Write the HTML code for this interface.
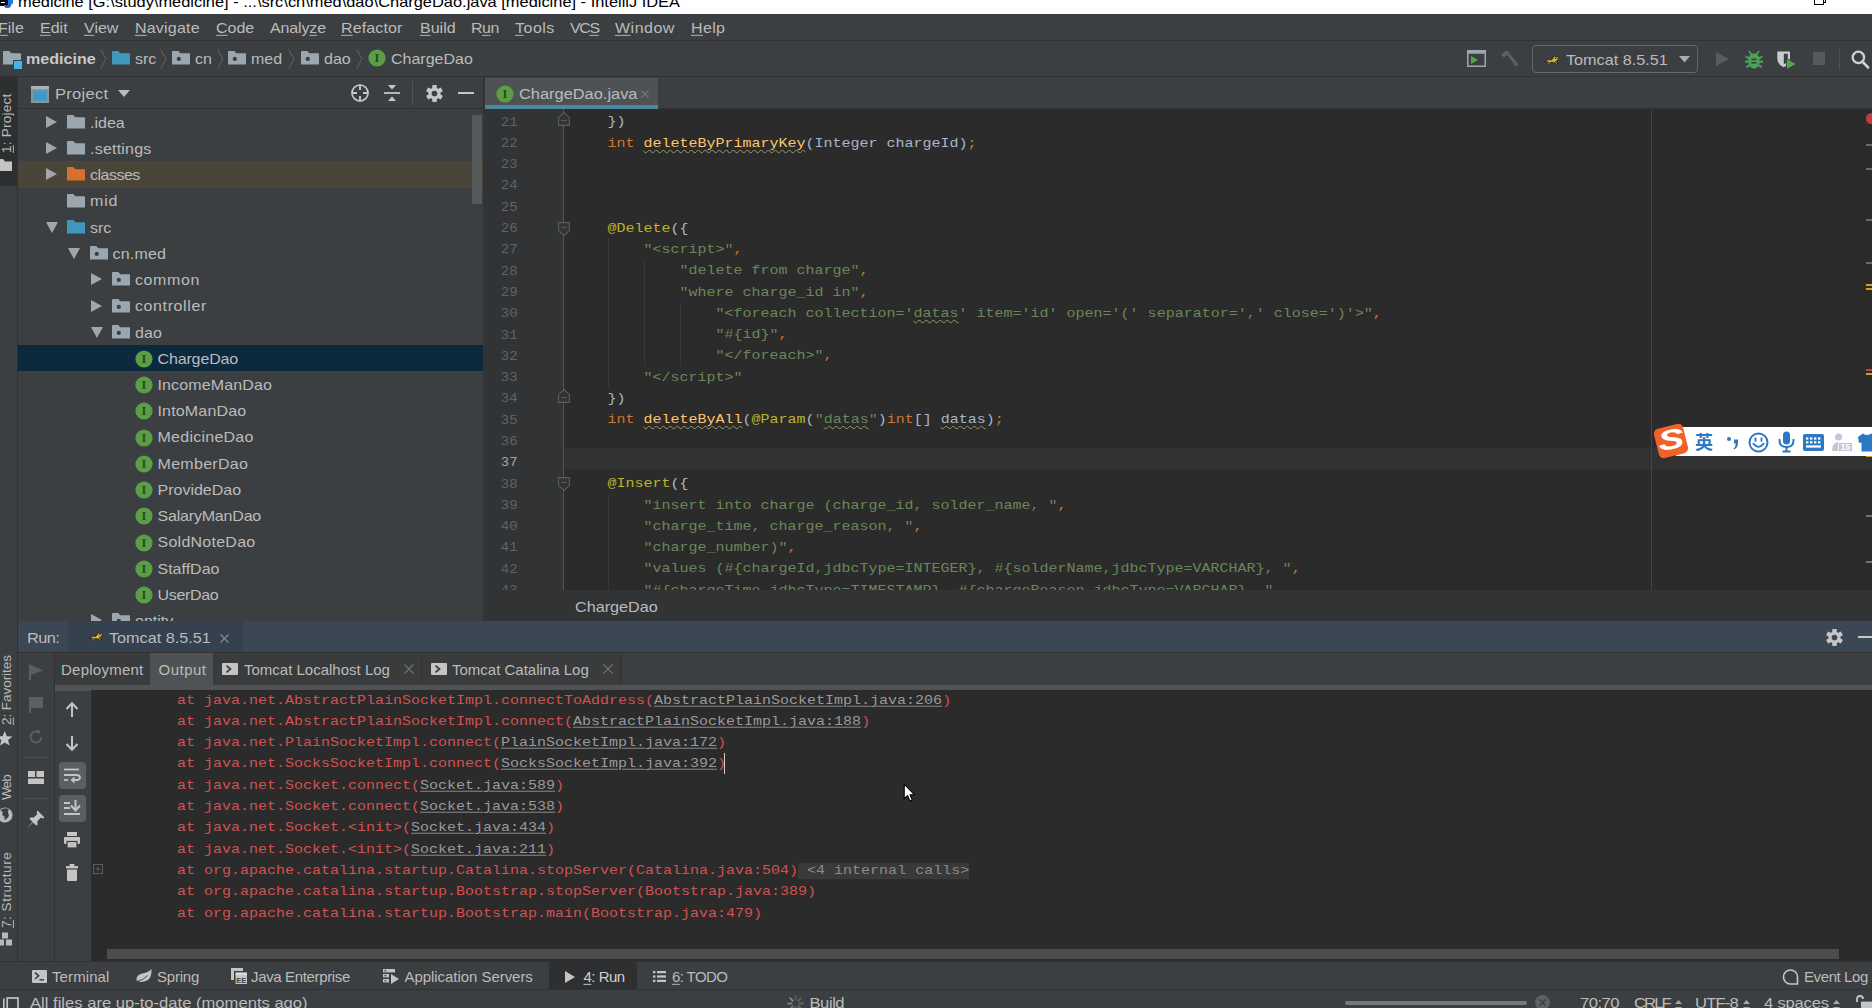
<!DOCTYPE html>
<html><head><meta charset="utf-8"><title>medicine - IntelliJ IDEA</title>
<style>
*{box-sizing:border-box;margin:0;padding:0}
html,body{width:1872px;height:1008px;overflow:hidden;background:#3c3f41}
body{position:relative;font-family:"Liberation Sans","Noto Sans CJK SC",sans-serif;font-size:16px;color:#bbbbbb;}
.a{position:absolute;white-space:pre}
u{text-decoration-thickness:1px;text-underline-offset:2px}
.mono{font-family:"Liberation Mono",monospace;font-size:15px}
svg{position:absolute;overflow:visible}
#menu span,#nav span,.row span,#bbar span,#status span,.t{transform:scaleY(0.925);transform-origin:0 15.2px}
.t{}
/* sections */
#title{left:0;top:0;width:1872px;height:14px;background:#fff;overflow:hidden}
#menu{left:0;top:14px;width:1872px;height:27px;background:#3c3f41;border-bottom:1px solid #323232}
#menu span{position:absolute;top:3.8px;line-height:20px;font-size:16px;color:#bbbbbb}
#nav{left:0;top:41px;width:1872px;height:36px;background:#3c3f41;border-bottom:1px solid #323232}
#nav span{position:absolute;top:7.6px;line-height:20px}
#lstrip{left:0;top:77px;width:18px;height:884px;background:#3c3f41;border-right:1px solid #323232}
.vt{position:absolute;transform-origin:0 0;transform:rotate(-90deg) translateY(13.5px) scaleY(0.925) translateY(-13.5px);white-space:pre;font-size:13.6px;line-height:18px;color:#bbbbbb}
#proj{left:18px;top:77px;width:465px;height:544px;background:#3c3f41;overflow:hidden}
#projh{left:0;top:0;width:465px;height:31.5px;border-bottom:1px solid #323232}
.row{position:absolute;left:0;width:465px;height:26.3px}
.row span{position:absolute;top:3.8px;line-height:20px;font-size:16px;color:#bbbbbb}
#ed{left:485px;top:77px;width:1387px;height:544px;background:#2b2b2b;overflow:hidden}
#edtabs{left:0;top:0;width:1387px;height:32px;background:#3c3f41;border-bottom:1px solid #323232}
#gut{left:0;top:32px;width:78.5px;height:481px;background:#313335}
.ln{position:absolute;left:0;width:32.6px;text-align:right;font-family:"Liberation Mono",monospace;font-size:14px;color:#606366;line-height:21px;height:21px;transform:scaleY(0.86);transform-origin:0 14.2px}
.cl{position:absolute;left:86.5px;font-family:"Liberation Mono",monospace;font-size:15px;line-height:21px;height:21px;white-space:pre;color:#a9b7c6;transform:scaleY(0.85);transform-origin:0 14.5px}
.k{color:#cc7832}.s{color:#6a8759}.an{color:#bbb529}.f{color:#ffc66d}
.w{text-decoration:underline wavy #9a9a72;text-decoration-thickness:1px;text-underline-offset:3px}
#crumb{left:0;top:513px;width:1387px;height:31px;background:#313335}
#run{left:18px;top:621px;width:1854px;height:340px;background:#3c3f41}
#runh{left:0;top:0;width:1854px;height:32px;background:#3b4754;border-bottom:1px solid #323232}
#con{left:73px;top:69px;width:1781px;height:271px;background:#2b2b2b;overflow:hidden}
.ol{position:absolute;left:86px;font-family:"Liberation Mono",monospace;font-size:15px;line-height:21px;height:21px;white-space:pre;color:#d25252;transform:scaleY(0.85);transform-origin:0 14.5px}
.ol b{font-weight:normal;color:#8a8a8a;background:#393939;padding:1px 0}
.ol i{font-style:normal;color:#9a9a9a;text-decoration:underline;text-decoration-thickness:1px;text-underline-offset:2px}
#bbar{left:0;top:961px;width:1872px;height:28px;background:#3c3f41;border-top:1px solid #323232}
#bbar span{position:absolute;top:5px;font-size:15px;line-height:20px}
#status{left:0;top:989px;width:1872px;height:19px;background:#3c3f41;border-top:1px solid #323232;overflow:hidden}
#status span{position:absolute;top:2px;font-size:16px;line-height:20px}
</style></head><body>
<!--TITLE-->
<div id="title" class="a">
<div class="a" style="left:0;top:0;width:9px;height:6px;background:#0b0b14"></div>
<div class="a" style="left:8px;top:0;width:5px;height:5px;background:#1f7be0;border-radius:0 0 3px 0"></div>
<div class="a" style="left:4px;top:5px;width:7px;height:3px;background:#2a62c9;border-radius:0 0 3px 3px"></div>
<div class="a" style="left:1px;top:2px;width:4px;height:1px;background:#fff"></div>
<div class="a t" style="left:18px;top:-9.4px;font-size:16.42px;line-height:20px;color:#000">medicine [G:\study\medicine] - ...\src\cn\med\dao\ChargeDao.java [medicine] - IntelliJ IDEA</div>
<div class="a" style="left:1822px;top:-6px;width:4px;height:9px;border:1.4px solid #000;border-left:none;background:#fff"></div>
<div class="a" style="left:1814px;top:-6px;width:9.5px;height:11.4px;border:1.4px solid #000;background:#fff"></div>
</div><!--/TITLE-->
<!--MENU-->
<div id="menu" class="a"><span style="left:-2px"><u>F</u>ile</span><span style="left:40px"><u>E</u>dit</span><span style="left:84px"><u>V</u>iew</span><span style="left:135px;letter-spacing:0.2px"><u>N</u>avigate</span><span style="left:216px"><u>C</u>ode</span><span style="left:270px;letter-spacing:-0.14px">Analy<u>z</u>e</span><span style="left:341px;letter-spacing:0.12px"><u>R</u>efactor</span><span style="left:420px"><u>B</u>uild</span><span style="left:471px;letter-spacing:-0.5px">R<u>u</u>n</span><span style="left:515px;letter-spacing:0.5px"><u>T</u>ools</span><span style="left:570px;letter-spacing:-1.4px">VC<u>S</u></span><span style="left:615px;letter-spacing:0.5px"><u>W</u>indow</span><span style="left:691px;letter-spacing:0.35px"><u>H</u>elp</span></div><!--/MENU-->
<!--NAV-->
<div id="nav" class="a"><svg style="left:3px;top:10px" width="18" height="13.5" viewBox="0 0 18 13.5"><path d="M0,1 Q0,0 1,0 H6.3 L8.3,2.3 H17.3 Q18,2.3 18,3 V13.5 H0 Z" fill="#9aa7b0"/></svg><div class="a" style="left:13px;top:19px;width:10px;height:9px;background:#3c3f41"></div><div class="a" style="left:14px;top:20px;width:8px;height:8px;background:#3eb6ea"></div><span style="left:26px;top:6.8px;font-weight:bold;font-size:16.1px;color:#c8c8c8">medicine</span><svg style="left:100px;top:8px" width="7" height="20" viewBox="0 0 7 20"><path d="M0.7,0.5 L6,10 L0.7,19.5" fill="none" stroke="#5b5e60" stroke-width="1.1"/></svg><svg style="left:112px;top:10px" width="18" height="13.5" viewBox="0 0 18 13.5"><path d="M0,1 Q0,0 1,0 H6.3 L8.3,2.3 H17.3 Q18,2.3 18,3 V13.5 H0 Z" fill="#3f97bd"/></svg><span style="left:135px">src</span><svg style="left:160px;top:8px" width="7" height="20" viewBox="0 0 7 20"><path d="M0.7,0.5 L6,10 L0.7,19.5" fill="none" stroke="#5b5e60" stroke-width="1.1"/></svg><svg style="left:172px;top:10px" width="18" height="13.5" viewBox="0 0 18 13.5"><path d="M0,1 Q0,0 1,0 H6.3 L8.3,2.3 H17.3 Q18,2.3 18,3 V13.5 H0 Z" fill="#9aa7b0"/><circle cx="6.8" cy="7.9" r="2.1" fill="#3c3f41"/></svg><span style="left:195px">cn</span><svg style="left:217px;top:8px" width="7" height="20" viewBox="0 0 7 20"><path d="M0.7,0.5 L6,10 L0.7,19.5" fill="none" stroke="#5b5e60" stroke-width="1.1"/></svg><svg style="left:228px;top:10px" width="18" height="13.5" viewBox="0 0 18 13.5"><path d="M0,1 Q0,0 1,0 H6.3 L8.3,2.3 H17.3 Q18,2.3 18,3 V13.5 H0 Z" fill="#9aa7b0"/><circle cx="6.8" cy="7.9" r="2.1" fill="#3c3f41"/></svg><span style="left:251px">med</span><svg style="left:288px;top:8px" width="7" height="20" viewBox="0 0 7 20"><path d="M0.7,0.5 L6,10 L0.7,19.5" fill="none" stroke="#5b5e60" stroke-width="1.1"/></svg><svg style="left:301px;top:10px" width="18" height="13.5" viewBox="0 0 18 13.5"><path d="M0,1 Q0,0 1,0 H6.3 L8.3,2.3 H17.3 Q18,2.3 18,3 V13.5 H0 Z" fill="#9aa7b0"/><circle cx="6.8" cy="7.9" r="2.1" fill="#3c3f41"/></svg><span style="left:324px">dao</span><svg style="left:356px;top:8px" width="7" height="20" viewBox="0 0 7 20"><path d="M0.7,0.5 L6,10 L0.7,19.5" fill="none" stroke="#5b5e60" stroke-width="1.1"/></svg><svg style="left:368px;top:8px" width="18" height="18" viewBox="0 0 18 18"><circle cx="9" cy="9" r="8.6" fill="#5a9f45"/><text x="9" y="13.2" text-anchor="middle" font-family="Liberation Serif,serif" font-weight="bold" font-size="12.5" fill="#2c4a22">I</text></svg><span style="left:391px">ChargeDao</span><svg style="left:1467px;top:9px" width="19" height="17" viewBox="0 0 19 17"><rect x="0.75" y="0.75" width="17.5" height="15.5" fill="none" stroke="#9aa7b0" stroke-width="1.5"/><rect x="0.75" y="0.75" width="17.5" height="3" fill="#9aa7b0"/><path d="M4,6 L11,10 L4,14 Z" fill="#57a64a"/></svg><svg style="left:1499px;top:9px" width="20" height="18" viewBox="0 0 20 18"><path d="M2,5 L7,0.8 L11.5,2.6 L9,4.2 L7.6,5.6 L5,7.6 Z" fill="#5e6163"/><path d="M8.3,5.2 L10.5,3.4 L19.3,14.6 L17,16.6 Z" fill="#5e6163"/></svg><div class="a" style="left:1532px;top:4px;width:166px;height:28px;border:1px solid #646768;border-radius:4px"></div><svg style="left:1544px;top:14px" width="16.0" height="11.0" viewBox="0 0 16 11"><path d="M0.5,6.5 L4,4.6 L7.5,5 L9,3.2 L10,0.6 L11.2,2 L13.2,2 L14.4,0.6 L14.8,3.4 L13.6,5.6 L11.4,6.4 L14.5,8.6 L12.5,8.8 L9.6,7.4 L6.4,7.4 L3.6,10 L2.6,9.4 L4.6,7 L2.6,6.8 Z" fill="#d9b73c" stroke="#1e1c14" stroke-width="0.8" stroke-linejoin="round"/><circle cx="11.4" cy="3.3" r="0.6" fill="#111"/><circle cx="13.3" cy="3.3" r="0.6" fill="#111"/></svg><span style="left:1566px;font-size:16.2px">Tomcat 8.5.51</span><svg style="left:1678.5px;top:15.3px" width="11" height="6.4" viewBox="0 0 12 7"><path d="M0,0 H12 L6,7 Z" fill="#adadad"/></svg><svg style="left:1716px;top:11px" width="13" height="14" viewBox="0 0 13 14"><path d="M0,0 L13,7 L0,14 Z" fill="#5a5d5f"/></svg><svg style="left:1745px;top:9px" width="18" height="19" viewBox="0 0 18 19"><g fill="#4da158"><path d="M9,3.6 C13.4,3.6 14.6,7 14.6,11 C14.6,15.6 12,18.6 9,18.6 C6,18.6 3.4,15.6 3.4,11 C3.4,7 4.6,3.6 9,3.6Z"/><path d="M0.6,5.6 L5,7.4 V9.8 L0.6,7.8Z M17.4,5.6 L13,7.4 V9.8 L17.4,7.8Z M0,10.4 H5 V12.8 H0Z M18,10.4 H13 V12.8 H18Z M0.8,16.6 L5,13.6 V16 L2,18.2Z M17.2,16.6 L13,13.6 V16 L16,18.2Z M4.4,0.6 L7.6,4 L6,5 L3.2,1.6Z M13.6,0.6 L10.4,4 L12,5 L14.8,1.6Z"/></g><rect x="6.4" y="8.6" width="5.2" height="1.6" fill="#3c3f41"/><rect x="6.4" y="12" width="5.2" height="1.6" fill="#3c3f41"/></svg><svg style="left:1777px;top:10px" width="20" height="19" viewBox="0 0 20 19"><path d="M0.3,0.6 H13 V8 Q13,13.4 6.6,16.2 Q0.3,13.4 0.3,8 Z" fill="#c8ccce"/><path d="M6.8,2.8 H10.8 V8 Q10.8,11 6.8,13.4 Z" fill="#3c3f41"/><path d="M9.6,7.4 L19.4,13 L9.6,18.6 Z" fill="#57a64a" stroke="#3c3f41" stroke-width="0.9"/></svg><div class="a" style="left:1812.6px;top:11.3px;width:12.8px;height:12.6px;background:#58595b"></div><div class="a" style="left:1839px;top:7px;width:1px;height:22px;background:#515151"></div><svg style="left:1850px;top:9px" width="20" height="20" viewBox="0 0 20 20"><circle cx="8.4" cy="7.4" r="5.7" fill="none" stroke="#cfcfcf" stroke-width="2.3"/><path d="M12.6,11.8 L18,17.4" stroke="#cfcfcf" stroke-width="2.8" stroke-linecap="round"/></svg></div><!--/NAV-->
<!--LSTRIP-->
<div id="lstrip" class="a"><div class="a" style="left:0;top:0;width:17px;height:109px;background:#2d2f30"></div><div class="vt" style="left:-2.1px;top:75.5px;letter-spacing:0.2px"><u>1</u>: Project</div><svg style="left:-6px;top:82px" width="18" height="12" viewBox="0 0 18 12"><path d="M0,0 H9 L11,2.4 H18 V12 H0 Z" fill="#c4c4c4"/></svg><div class="vt" style="left:-2.1px;top:647.5px;letter-spacing:-0.1px"><u>2</u>: Favorites</div><svg style="left:-3px;top:653.5px" width="15.5" height="14.6" viewBox="0 0 18 17"><path d="M9,0 L11.4,6 L18,6.4 L12.9,10.6 L14.6,17 L9,13.4 L3.4,17 L5.1,10.6 L0,6.4 L6.6,6 Z" fill="#c4c4c4"/></svg><div class="vt" style="left:-2.1px;top:722.5px;letter-spacing:-1px">Web</div><svg style="left:-3px;top:729.7px" width="16" height="16" viewBox="0 0 16 16"><circle cx="8" cy="8" r="7.6" fill="#b8b8b8"/><path d="M3,3 Q7,5 5,8 Q9,9 7,13 Q11,12 12,8 Q10,5 12,2 Q8,0 3,3Z" fill="#3c3f41"/></svg><div class="vt" style="left:-2.1px;top:850.5px;letter-spacing:0.5px"><u>7</u>: Structure</div><svg style="left:-2px;top:855px" width="14" height="14" viewBox="0 0 14 13"><rect x="0" y="7" width="6" height="6" fill="#b8b8b8"/><rect x="8" y="7" width="6" height="6" fill="#b8b8b8"/><rect x="4" y="0" width="6" height="6" fill="#b8b8b8"/></svg></div><!--/LSTRIP-->
<!--PROJ-->
<div id="proj" class="a"><div id="projh" class="a"><svg style="left:13px;top:9px" width="18" height="17" viewBox="0 0 18 17"><rect x="0" y="0" width="18" height="17" fill="#8a959b"/><rect x="0" y="0" width="18" height="3" fill="#aab4ba"/><rect x="2.2" y="4.6" width="13.6" height="10.2" fill="#3e9bc6"/></svg><span class="a t" style="left:37px;top:6.5px;line-height:20px;font-size:16.6px;letter-spacing:0.25px">Project</span><svg style="left:100px;top:13px" width="12" height="7" viewBox="0 0 12 7"><path d="M0,0 H12 L6,7 Z" fill="#bbbbbb"/></svg><svg style="left:332px;top:6px" width="20" height="20" viewBox="0 0 20 20"><circle cx="10" cy="10" r="8" fill="none" stroke="#c6c6c6" stroke-width="1.7"/><path d="M10,1.5 V7 M10,13 V18.5 M1.5,10 H7 M13,10 H18.5" stroke="#c6c6c6" stroke-width="1.9"/></svg><svg style="left:365px;top:7px" width="18" height="18" viewBox="0 0 18 18"><path d="M1,9 H17" stroke="#c6c6c6" stroke-width="1.8"/><path d="M5,1 H13 L9,5.4 Z M5,17 H13 L9,12.6 Z" fill="#c6c6c6"/></svg><div class="a" style="left:394px;top:4px;width:1px;height:24px;background:#505355"></div><svg style="left:407.5px;top:7.5px" width="17" height="17" viewBox="0 0 18 18"><g fill="#c6c6c6"><circle cx="9" cy="9" r="6.4"/><rect x="6.6" y="0" width="4.8" height="18" rx="0.8" transform="rotate(0 9 9)"/><rect x="6.6" y="0" width="4.8" height="18" rx="0.8" transform="rotate(60 9 9)"/><rect x="6.6" y="0" width="4.8" height="18" rx="0.8" transform="rotate(120 9 9)"/></g><circle cx="9" cy="9" r="3" fill="#3c3f41"/></svg><div class="a" style="left:440px;top:15px;width:16px;height:2px;background:#c6c6c6"></div></div><div class="row" style="top:32.00px;"><svg style="left:28.0px;top:7px" width="11" height="12" viewBox="0 0 11 12"><path d="M0,0 L11,6 L0,12 Z" fill="#a3a6a8"/></svg><svg style="left:49.0px;top:6px" width="18" height="13.5" viewBox="0 0 18 13.5"><path d="M0,1 Q0,0 1,0 H6.3 L8.3,2.3 H17.3 Q18,2.3 18,3 V13.5 H0 Z" fill="#9aa7b0"/></svg><span style="left:72.0px">.idea</span></div><div class="row" style="top:58.22px;"><svg style="left:28.0px;top:7px" width="11" height="12" viewBox="0 0 11 12"><path d="M0,0 L11,6 L0,12 Z" fill="#a3a6a8"/></svg><svg style="left:49.0px;top:6px" width="18" height="13.5" viewBox="0 0 18 13.5"><path d="M0,1 Q0,0 1,0 H6.3 L8.3,2.3 H17.3 Q18,2.3 18,3 V13.5 H0 Z" fill="#9aa7b0"/></svg><span style="left:72.0px;letter-spacing:0.22px">.settings</span></div><div class="row" style="top:84.44px;background:#494538;height:27px;"><svg style="left:28.0px;top:7px" width="11" height="12" viewBox="0 0 11 12"><path d="M0,0 L11,6 L0,12 Z" fill="#a3a6a8"/></svg><svg style="left:49.0px;top:6px" width="18" height="13.5" viewBox="0 0 18 13.5"><path d="M0,1 Q0,0 1,0 H6.3 L8.3,2.3 H17.3 Q18,2.3 18,3 V13.5 H0 Z" fill="#d8712f"/></svg><span style="left:72.0px;letter-spacing:-0.5px">classes</span></div><div class="row" style="top:110.66px;"><svg style="left:49.0px;top:6px" width="18" height="13.5" viewBox="0 0 18 13.5"><path d="M0,1 Q0,0 1,0 H6.3 L8.3,2.3 H17.3 Q18,2.3 18,3 V13.5 H0 Z" fill="#9aa7b0"/></svg><span style="left:72.0px;letter-spacing:0.8px">mid</span></div><div class="row" style="top:136.88px;"><svg style="left:27.5px;top:8px" width="12" height="11" viewBox="0 0 12 11"><path d="M0,0 H12 L6,11 Z" fill="#a3a6a8"/></svg><svg style="left:49.0px;top:6px" width="18" height="13.5" viewBox="0 0 18 13.5"><path d="M0,1 Q0,0 1,0 H6.3 L8.3,2.3 H17.3 Q18,2.3 18,3 V13.5 H0 Z" fill="#3f97bd"/></svg><span style="left:72.0px">src</span></div><div class="row" style="top:163.10px;"><svg style="left:50.0px;top:8px" width="12" height="11" viewBox="0 0 12 11"><path d="M0,0 H12 L6,11 Z" fill="#a3a6a8"/></svg><svg style="left:71.5px;top:6px" width="18" height="13.5" viewBox="0 0 18 13.5"><path d="M0,1 Q0,0 1,0 H6.3 L8.3,2.3 H17.3 Q18,2.3 18,3 V13.5 H0 Z" fill="#9aa7b0"/><circle cx="6.8" cy="7.9" r="2.1" fill="#3c3f41"/></svg><span style="left:94.5px;letter-spacing:0.2px">cn.med</span></div><div class="row" style="top:189.32px;"><svg style="left:73.0px;top:7px" width="11" height="12" viewBox="0 0 11 12"><path d="M0,0 L11,6 L0,12 Z" fill="#a3a6a8"/></svg><svg style="left:94.0px;top:6px" width="18" height="13.5" viewBox="0 0 18 13.5"><path d="M0,1 Q0,0 1,0 H6.3 L8.3,2.3 H17.3 Q18,2.3 18,3 V13.5 H0 Z" fill="#9aa7b0"/><circle cx="6.8" cy="7.9" r="2.1" fill="#3c3f41"/></svg><span style="left:117.0px;letter-spacing:0.6px">common</span></div><div class="row" style="top:215.54px;"><svg style="left:73.0px;top:7px" width="11" height="12" viewBox="0 0 11 12"><path d="M0,0 L11,6 L0,12 Z" fill="#a3a6a8"/></svg><svg style="left:94.0px;top:6px" width="18" height="13.5" viewBox="0 0 18 13.5"><path d="M0,1 Q0,0 1,0 H6.3 L8.3,2.3 H17.3 Q18,2.3 18,3 V13.5 H0 Z" fill="#9aa7b0"/><circle cx="6.8" cy="7.9" r="2.1" fill="#3c3f41"/></svg><span style="left:117.0px;letter-spacing:0.6px">controller</span></div><div class="row" style="top:241.76px;"><svg style="left:72.5px;top:8px" width="12" height="11" viewBox="0 0 12 11"><path d="M0,0 H12 L6,11 Z" fill="#a3a6a8"/></svg><svg style="left:94.0px;top:6px" width="18" height="13.5" viewBox="0 0 18 13.5"><path d="M0,1 Q0,0 1,0 H6.3 L8.3,2.3 H17.3 Q18,2.3 18,3 V13.5 H0 Z" fill="#9aa7b0"/><circle cx="6.8" cy="7.9" r="2.1" fill="#3c3f41"/></svg><span style="left:117.0px;letter-spacing:0.15px">dao</span></div><div class="row" style="top:267.98px;background:#0d293e;"><svg style="left:116.8px;top:5px" width="18" height="18" viewBox="0 0 18 18"><circle cx="9" cy="9" r="8.6" fill="#5a9f45"/><text x="9" y="13.2" text-anchor="middle" font-family="Liberation Serif,serif" font-weight="bold" font-size="12.5" fill="#2c4a22">I</text></svg><span style="left:139.5px;letter-spacing:-0.14px">ChargeDao</span></div><div class="row" style="top:294.20px;"><svg style="left:116.8px;top:5px" width="18" height="18" viewBox="0 0 18 18"><circle cx="9" cy="9" r="8.6" fill="#5a9f45"/><text x="9" y="13.2" text-anchor="middle" font-family="Liberation Serif,serif" font-weight="bold" font-size="12.5" fill="#2c4a22">I</text></svg><span style="left:139.5px;letter-spacing:0.14px">IncomeManDao</span></div><div class="row" style="top:320.42px;"><svg style="left:116.8px;top:5px" width="18" height="18" viewBox="0 0 18 18"><circle cx="9" cy="9" r="8.6" fill="#5a9f45"/><text x="9" y="13.2" text-anchor="middle" font-family="Liberation Serif,serif" font-weight="bold" font-size="12.5" fill="#2c4a22">I</text></svg><span style="left:139.5px;letter-spacing:0.17px">IntoManDao</span></div><div class="row" style="top:346.64px;"><svg style="left:116.8px;top:5px" width="18" height="18" viewBox="0 0 18 18"><circle cx="9" cy="9" r="8.6" fill="#5a9f45"/><text x="9" y="13.2" text-anchor="middle" font-family="Liberation Serif,serif" font-weight="bold" font-size="12.5" fill="#2c4a22">I</text></svg><span style="left:139.5px;letter-spacing:0.25px">MedicineDao</span></div><div class="row" style="top:372.86px;"><svg style="left:116.8px;top:5px" width="18" height="18" viewBox="0 0 18 18"><circle cx="9" cy="9" r="8.6" fill="#5a9f45"/><text x="9" y="13.2" text-anchor="middle" font-family="Liberation Serif,serif" font-weight="bold" font-size="12.5" fill="#2c4a22">I</text></svg><span style="left:139.5px;letter-spacing:0.3px">MemberDao</span></div><div class="row" style="top:399.08px;"><svg style="left:116.8px;top:5px" width="18" height="18" viewBox="0 0 18 18"><circle cx="9" cy="9" r="8.6" fill="#5a9f45"/><text x="9" y="13.2" text-anchor="middle" font-family="Liberation Serif,serif" font-weight="bold" font-size="12.5" fill="#2c4a22">I</text></svg><span style="left:139.5px">ProvideDao</span></div><div class="row" style="top:425.30px;"><svg style="left:116.8px;top:5px" width="18" height="18" viewBox="0 0 18 18"><circle cx="9" cy="9" r="8.6" fill="#5a9f45"/><text x="9" y="13.2" text-anchor="middle" font-family="Liberation Serif,serif" font-weight="bold" font-size="12.5" fill="#2c4a22">I</text></svg><span style="left:139.5px;letter-spacing:-0.19px">SalaryManDao</span></div><div class="row" style="top:451.52px;"><svg style="left:116.8px;top:5px" width="18" height="18" viewBox="0 0 18 18"><circle cx="9" cy="9" r="8.6" fill="#5a9f45"/><text x="9" y="13.2" text-anchor="middle" font-family="Liberation Serif,serif" font-weight="bold" font-size="12.5" fill="#2c4a22">I</text></svg><span style="left:139.5px;letter-spacing:0.25px">SoldNoteDao</span></div><div class="row" style="top:477.74px;"><svg style="left:116.8px;top:5px" width="18" height="18" viewBox="0 0 18 18"><circle cx="9" cy="9" r="8.6" fill="#5a9f45"/><text x="9" y="13.2" text-anchor="middle" font-family="Liberation Serif,serif" font-weight="bold" font-size="12.5" fill="#2c4a22">I</text></svg><span style="left:139.5px">StaffDao</span></div><div class="row" style="top:503.96px;"><svg style="left:116.8px;top:5px" width="18" height="18" viewBox="0 0 18 18"><circle cx="9" cy="9" r="8.6" fill="#5a9f45"/><text x="9" y="13.2" text-anchor="middle" font-family="Liberation Serif,serif" font-weight="bold" font-size="12.5" fill="#2c4a22">I</text></svg><span style="left:139.5px;letter-spacing:-0.33px">UserDao</span></div><div class="row" style="top:530.18px;"><svg style="left:73.0px;top:7px" width="11" height="12" viewBox="0 0 11 12"><path d="M0,0 L11,6 L0,12 Z" fill="#a3a6a8"/></svg><svg style="left:94.0px;top:6px" width="18" height="13.5" viewBox="0 0 18 13.5"><path d="M0,1 Q0,0 1,0 H6.3 L8.3,2.3 H17.3 Q18,2.3 18,3 V13.5 H0 Z" fill="#9aa7b0"/><circle cx="6.8" cy="7.9" r="2.1" fill="#3c3f41"/></svg><span style="left:117.0px">entity</span></div><div class="a" style="left:454px;top:38px;width:10px;height:89px;background:#5a5d5f;opacity:.85"></div></div><!--/PROJ-->
<!--ED-->
<div class="a" style="left:483px;top:77px;width:2px;height:544px;background:#313335"></div><div id="ed" class="a"><div id="edtabs" class="a"><div class="a" style="left:0;top:1px;width:173px;height:28px;background:#4e5254"></div><div class="a" style="left:0;top:28px;width:173px;height:4px;background:#4a88a2"></div><svg style="left:11px;top:8px" width="18" height="18" viewBox="0 0 18 18"><circle cx="9" cy="9" r="8.6" fill="#5a9f45"/><text x="9" y="13.2" text-anchor="middle" font-family="Liberation Serif,serif" font-weight="bold" font-size="12.5" fill="#2c4a22">I</text></svg><span class="a t" style="left:34px;top:6px;line-height:20px;font-size:16.4px;color:#bbbbbb">ChargeDao.java</span><svg style="left:156px;top:12.5px" width="8" height="8" viewBox="0 0 8 8"><path d="M0.5,0.5 L7.5,7.5 M7.5,0.5 L0.5,7.5" stroke="#737678" stroke-width="1.2"/></svg></div><div id="gut" class="a"></div><div class="a" style="left:78px;top:32px;width:1px;height:481px;background:#555555"></div><div class="a" style="left:79px;top:371.44px;width:1308px;height:21.6px;background:#323232"></div><div class="a" style="left:1166px;top:32px;width:1px;height:481px;background:#424445"></div><div class="a" style="left:122.5px;top:162.04px;width:1px;height:149.03px;background:#383838"></div><div class="a" style="left:158.5px;top:183.33px;width:1px;height:106.45px;background:#383838"></div><div class="a" style="left:194.5px;top:225.91px;width:1px;height:63.87px;background:#383838"></div><div class="a" style="left:122.5px;top:417.52px;width:1px;height:106.45px;background:#383838"></div><div class="ln" style="top:34.60px;color:#606366">21</div><div class="cl" style="top:34.30px">    })</div><div class="ln" style="top:55.89px;color:#606366">22</div><div class="cl" style="top:55.59px">    <span class="k">int</span> <span class="f w">deleteByPrimaryKey</span>(Integer chargeId)<span class="k">;</span></div><div class="ln" style="top:77.18px;color:#606366">23</div><div class="ln" style="top:98.47px;color:#606366">24</div><div class="ln" style="top:119.76px;color:#606366">25</div><div class="ln" style="top:141.05px;color:#606366">26</div><div class="cl" style="top:140.75px">    <span class="an">@Delete</span>({</div><div class="ln" style="top:162.34px;color:#606366">27</div><div class="cl" style="top:162.04px">        <span class="s">"&lt;script&gt;"</span><span class="k">,</span></div><div class="ln" style="top:183.63px;color:#606366">28</div><div class="cl" style="top:183.33px">            <span class="s">"delete from charge"</span><span class="k">,</span></div><div class="ln" style="top:204.92px;color:#606366">29</div><div class="cl" style="top:204.62px">            <span class="s">"where charge_id in"</span><span class="k">,</span></div><div class="ln" style="top:226.21px;color:#606366">30</div><div class="cl" style="top:225.91px">                <span class="s">"&lt;foreach collection='<span class="w">datas</span>' item='id' open='(' separator=',' close=')'&gt;"</span><span class="k">,</span></div><div class="ln" style="top:247.50px;color:#606366">31</div><div class="cl" style="top:247.20px">                <span class="s">"#{id}"</span><span class="k">,</span></div><div class="ln" style="top:268.79px;color:#606366">32</div><div class="cl" style="top:268.49px">                <span class="s">"&lt;/foreach&gt;"</span><span class="k">,</span></div><div class="ln" style="top:290.08px;color:#606366">33</div><div class="cl" style="top:289.78px">        <span class="s">"&lt;/script&gt;"</span></div><div class="ln" style="top:311.37px;color:#606366">34</div><div class="cl" style="top:311.07px">    })</div><div class="ln" style="top:332.66px;color:#606366">35</div><div class="cl" style="top:332.36px">    <span class="k">int</span> <span class="f w">deleteByAll</span>(<span class="an">@Param</span>(<span class="s">"<span class="w">datas</span>"</span>)<span class="k">int</span>[] <span class="w">datas</span>)<span class="k">;</span></div><div class="ln" style="top:353.95px;color:#606366">36</div><div class="ln" style="top:375.24px;color:#a4a3a3">37</div><div class="ln" style="top:396.53px;color:#606366">38</div><div class="cl" style="top:396.23px">    <span class="an">@Insert</span>({</div><div class="ln" style="top:417.82px;color:#606366">39</div><div class="cl" style="top:417.52px">        <span class="s">"insert into charge (charge_id, solder_name, "</span><span class="k">,</span></div><div class="ln" style="top:439.11px;color:#606366">40</div><div class="cl" style="top:438.81px">        <span class="s">"charge_time, charge_reason, "</span><span class="k">,</span></div><div class="ln" style="top:460.40px;color:#606366">41</div><div class="cl" style="top:460.10px">        <span class="s">"charge_number)"</span><span class="k">,</span></div><div class="ln" style="top:481.69px;color:#606366">42</div><div class="cl" style="top:481.39px">        <span class="s">"values (#{chargeId,jdbcType=INTEGER}, #{solderName,jdbcType=VARCHAR}, "</span><span class="k">,</span></div><div class="ln" style="top:502.98px;color:#606366">43</div><div class="cl" style="top:502.68px">        <span class="s">"#{chargeTime,jdbcType=TIMESTAMP}, #{chargeReason,jdbcType=VARCHAR}, "</span><span class="k">,</span></div><svg style="left:73px;top:35.40px" width="12" height="14" viewBox="0 0 12 14"><path d="M0.6,13.4 V5.4 L6,0.6 L11.4,5.4 V13.4 Z" fill="#313335" stroke="#5a5d5f" stroke-width="1.1"/><path d="M3.2,8.6 H8.8" stroke="#5a5d5f" stroke-width="1.1"/></svg><svg style="left:73px;top:144.85px" width="12" height="14" viewBox="0 0 12 14"><path d="M0.6,0.6 V8.6 L6,13.4 L11.4,8.6 V0.6 Z" fill="#313335" stroke="#5a5d5f" stroke-width="1.1"/><path d="M3.2,5.4 H8.8" stroke="#5a5d5f" stroke-width="1.1"/></svg><svg style="left:73px;top:312.17px" width="12" height="14" viewBox="0 0 12 14"><path d="M0.6,13.4 V5.4 L6,0.6 L11.4,5.4 V13.4 Z" fill="#313335" stroke="#5a5d5f" stroke-width="1.1"/><path d="M3.2,8.6 H8.8" stroke="#5a5d5f" stroke-width="1.1"/></svg><svg style="left:73px;top:400.33px" width="12" height="14" viewBox="0 0 12 14"><path d="M0.6,0.6 V8.6 L6,13.4 L11.4,8.6 V0.6 Z" fill="#313335" stroke="#5a5d5f" stroke-width="1.1"/><path d="M3.2,5.4 H8.8" stroke="#5a5d5f" stroke-width="1.1"/></svg><div class="a" style="left:1381px;top:36px;width:11px;height:11px;border-radius:6px;background:#c93b3b"></div><div class="a" style="left:1381px;top:67px;width:6px;height:2px;background:#6a6a5a"></div><div class="a" style="left:1381px;top:91px;width:6px;height:2px;background:#6a6a5a"></div><div class="a" style="left:1381px;top:142px;width:6px;height:2px;background:#6a6a5a"></div><div class="a" style="left:1381px;top:185px;width:6px;height:2px;background:#6a6a5a"></div><div class="a" style="left:1381px;top:206.5px;width:6px;height:2px;background:#c9a227"></div><div class="a" style="left:1381px;top:210.5px;width:6px;height:2px;background:#c9a227"></div><div class="a" style="left:1381px;top:292px;width:6px;height:2px;background:#c93b3b"></div><div class="a" style="left:1381px;top:295.5px;width:6px;height:2px;background:#c9a227"></div><div class="a" style="left:1381px;top:378px;width:6px;height:2px;background:#c9a227"></div><div class="a" style="left:1381px;top:438px;width:6px;height:2px;background:#77775f"></div><div class="a" style="left:1381px;top:484px;width:6px;height:2px;background:#77775f"></div><div id="crumb" class="a"><span class="a t" style="left:90px;top:6.1px;line-height:20px;font-size:16.2px;color:#bbbbbb">ChargeDao</span></div></div><!--/ED-->
<!--RUN-->
<div id="run" class="a"><div id="runh" class="a"><span class="a t" style="left:9px;top:6px;line-height:20px;font-size:16.4px;letter-spacing:-0.6px">Run:</span><div class="a" style="left:50px;top:0;width:175px;height:31px;background:#35414f"></div><svg style="left:71px;top:11px" width="14.4" height="9.9" viewBox="0 0 16 11"><path d="M0.5,6.5 L4,4.6 L7.5,5 L9,3.2 L10,0.6 L11.2,2 L13.2,2 L14.4,0.6 L14.8,3.4 L13.6,5.6 L11.4,6.4 L14.5,8.6 L12.5,8.8 L9.6,7.4 L6.4,7.4 L3.6,10 L2.6,9.4 L4.6,7 L2.6,6.8 Z" fill="#d9b73c" stroke="#1e1c14" stroke-width="0.8" stroke-linejoin="round"/><circle cx="11.4" cy="3.3" r="0.6" fill="#111"/><circle cx="13.3" cy="3.3" r="0.6" fill="#111"/></svg><span class="a t" style="left:91px;top:6px;line-height:20px;font-size:16.2px">Tomcat 8.5.51</span><svg style="left:202px;top:12.5px" width="9" height="9" viewBox="0 0 9 9"><path d="M0.5,0.5 L8.5,8.5 M8.5,0.5 L0.5,8.5" stroke="#7d8893" stroke-width="1.3"/></svg><svg style="left:1807.5px;top:7.5px" width="17" height="17" viewBox="0 0 18 18"><g fill="#c6c6c6"><circle cx="9" cy="9" r="6.4"/><rect x="6.6" y="0" width="4.8" height="18" rx="0.8" transform="rotate(0 9 9)"/><rect x="6.6" y="0" width="4.8" height="18" rx="0.8" transform="rotate(60 9 9)"/><rect x="6.6" y="0" width="4.8" height="18" rx="0.8" transform="rotate(120 9 9)"/></g><circle cx="9" cy="9" r="3" fill="#3b4754"/></svg><div class="a" style="left:1840px;top:15px;width:16px;height:2px;background:#c6c6c6"></div></div><div class="a" style="left:36px;top:32px;width:1px;height:308px;background:#323232"></div><svg style="left:11px;top:43px" width="14" height="16" viewBox="0 0 14 16"><path d="M0,0 L14,6.5 L2,11 V16 H0 Z" fill="#5c5f61"/></svg><svg style="left:11px;top:76px" width="14" height="16" viewBox="0 0 14 16"><path d="M0,0 H14 V11 H2 V16 H0 Z" fill="#5c5f61"/></svg><svg style="left:10px;top:108px" width="16" height="16" viewBox="0 0 16 16"><path d="M13.5,8 A5.5,5.5 0 1 1 8,2.5 H11" fill="none" stroke="#5c5f61" stroke-width="2"/><path d="M9.5,0 L13,2.6 L9.5,5.4 Z" fill="#5c5f61"/></svg><div class="a" style="left:6px;top:136px;width:24px;height:1px;background:#4e5052"></div><svg style="left:10px;top:150px" width="16" height="13" viewBox="0 0 16 13"><rect x="0" y="0" width="7" height="6" fill="#c4c4c4"/><rect x="8.5" y="0" width="7.5" height="6" fill="#c4c4c4"/><rect x="0" y="7.5" width="16" height="5.5" fill="#c4c4c4"/></svg><div class="a" style="left:6px;top:177px;width:24px;height:1px;background:#4e5052"></div><svg style="left:9px;top:189px" width="18" height="18" viewBox="0 0 18 18"><path d="M10.5,0.5 L17.5,7.5 L15.6,8.4 L14,7.6 L10.4,11.2 L10.6,14.4 L9.2,15.6 L6,12.4 L0.6,17.6 L0.4,17.4 L5.6,12 L2.4,8.8 L3.6,7.4 L6.8,7.6 L10.4,4 L9.6,2.4 Z" fill="#c4c4c4"/></svg><div class="a" style="left:37px;top:32px;width:568px;height:32.4px;background:#393b3d"></div><div class="a" style="left:37px;top:64.2px;width:1817px;height:6px;background:#505254"></div><div class="a" style="left:132px;top:32px;width:63px;height:33px;background:#4e5254"></div><span class="a t" style="left:43px;top:38px;font-size:15px;line-height:20px;margin-top:0.7px;letter-spacing:0.25px">Deployment</span><span class="a t" style="left:140.5px;top:38px;font-size:15px;line-height:20px;margin-top:0.7px;letter-spacing:0.5px">Output</span><svg style="left:204px;top:42px" width="16" height="12" viewBox="0 0 16 12"><rect width="16" height="12" rx="1" fill="#c4c4c4"/><path d="M4.5,2.6 L8.5,6 L4.5,9.4" fill="none" stroke="#3a3c3e" stroke-width="1.8"/></svg><span class="a t" style="left:226px;top:38px;font-size:15px;line-height:20px;margin-top:0.7px">Tomcat Localhost Log</span><svg style="left:386px;top:43px" width="10" height="10" viewBox="0 0 10 10"><path d="M0.5,0.5 L9.5,9.5 M9.5,0.5 L0.5,9.5" stroke="#6e7173" stroke-width="1.2"/></svg><div class="a" style="left:403px;top:34px;width:1px;height:28px;background:#323232"></div><svg style="left:413px;top:42px" width="16" height="12" viewBox="0 0 16 12"><rect width="16" height="12" rx="1" fill="#c4c4c4"/><path d="M4.5,2.6 L8.5,6 L4.5,9.4" fill="none" stroke="#3a3c3e" stroke-width="1.8"/></svg><span class="a t" style="left:434px;top:38px;font-size:15px;line-height:20px;margin-top:0.7px">Tomcat Catalina Log</span><svg style="left:585px;top:43px" width="10" height="10" viewBox="0 0 10 10"><path d="M0.5,0.5 L9.5,9.5 M9.5,0.5 L0.5,9.5" stroke="#6e7173" stroke-width="1.2"/></svg><div class="a" style="left:602px;top:34px;width:1px;height:28px;background:#323232"></div><svg style="left:47px;top:81px" width="14" height="15" viewBox="0 0 14 15"><path d="M7,15 V1.5 M1.5,7 L7,1.2 L12.5,7" fill="none" stroke="#c4c4c4" stroke-width="2"/></svg><svg style="left:47px;top:115px" width="14" height="15" viewBox="0 0 14 15"><path d="M7,0 V13.5 M1.5,8 L7,13.8 L12.5,8" fill="none" stroke="#c4c4c4" stroke-width="2"/></svg><div class="a" style="left:41px;top:141px;width:27px;height:27px;border-radius:4px;background:#5c5f61"></div><svg style="left:46px;top:147px" width="17" height="15" viewBox="0 0 17 15"><path d="M0,1.5 H15" stroke="#c4c4c4" stroke-width="1.8"/><path d="M0,7 H12.5 Q16,7 16,9.5 Q16,12 12.5,12 H10" fill="none" stroke="#c4c4c4" stroke-width="1.8"/><path d="M0,12 H4" stroke="#c4c4c4" stroke-width="1.8"/><path d="M10.5,8.6 L6.5,12 L10.5,15.4 Z" fill="#c4c4c4"/></svg><div class="a" style="left:41px;top:173.5px;width:27px;height:27px;border-radius:4px;background:#5c5f61"></div><svg style="left:46px;top:179px" width="17" height="16" viewBox="0 0 17 16"><path d="M0,3 H6 M0,8 H6 M0,14 H16" stroke="#c4c4c4" stroke-width="1.8"/><path d="M11.5,0 V9" stroke="#c4c4c4" stroke-width="2"/><path d="M7,5.5 L11.5,10.5 L16,5.5" fill="none" stroke="#c4c4c4" stroke-width="2"/></svg><svg style="left:46px;top:211px" width="16" height="16" viewBox="0 0 16 16"><rect x="3" y="0" width="10" height="4" fill="#c4c4c4"/><rect x="0" y="5" width="16" height="7" rx="1" fill="#c4c4c4"/><rect x="3" y="9.5" width="10" height="6.5" fill="#c4c4c4" stroke="#3c3f41" stroke-width="1.2"/></svg><svg style="left:48px;top:243px" width="12" height="17" viewBox="0 0 12 17"><rect x="0" y="2" width="12" height="2.4" fill="#c4c4c4"/><rect x="3.6" y="0" width="4.8" height="2.4" fill="#c4c4c4"/><path d="M1,5.6 H11 V16 Q11,17 10,17 H2 Q1,17 1,16 Z" fill="#c4c4c4"/></svg><div id="con" class="a"><div class="ol" style="top:-0.50px">at java.net.AbstractPlainSocketImpl.connectToAddress(<i>AbstractPlainSocketImpl.java:206</i>)</div><div class="ol" style="top:20.80px">at java.net.AbstractPlainSocketImpl.connect(<i>AbstractPlainSocketImpl.java:188</i>)</div><div class="ol" style="top:42.10px">at java.net.PlainSocketImpl.connect(<i>PlainSocketImpl.java:172</i>)</div><div class="ol" style="top:63.40px">at java.net.SocksSocketImpl.connect(<i>SocksSocketImpl.java:392</i>)</div><div class="ol" style="top:84.70px">at java.net.Socket.connect(<i>Socket.java:589</i>)</div><div class="ol" style="top:106.00px">at java.net.Socket.connect(<i>Socket.java:538</i>)</div><div class="ol" style="top:127.30px">at java.net.Socket.&lt;init&gt;(<i>Socket.java:434</i>)</div><div class="ol" style="top:148.60px">at java.net.Socket.&lt;init&gt;(<i>Socket.java:211</i>)</div><div class="ol" style="top:169.90px">at org.apache.catalina.startup.Catalina.stopServer(Catalina.java:504)<b> &lt;4 internal calls&gt;</b></div><div class="ol" style="top:191.20px">at org.apache.catalina.startup.Bootstrap.stopServer(Bootstrap.java:389)</div><div class="ol" style="top:212.50px">at org.apache.catalina.startup.Bootstrap.main(Bootstrap.java:479)</div><div class="a" style="left:632.5px;top:63.40px;width:1.6px;height:21px;background:#d0d0d0"></div><svg style="left:2px;top:174px" width="10" height="10" viewBox="0 0 10 10"><rect x="0.5" y="0.5" width="9" height="9" fill="none" stroke="#5a5d5f"/><path d="M2.5,5 H7.5 M5,2.5 V7.5" stroke="#5a5d5f"/></svg><div class="a" style="left:16px;top:258.5px;width:1732px;height:10px;background:#4a4c4e"></div></div><svg style="left:884.6px;top:162px" width="13" height="19" viewBox="0 0 13 19"><path d="M1.2,1.2 V15.6 L4.5,12.6 L7,18 L9.3,17 L7,11.8 H11.6 Z" fill="#fff" stroke="#000" stroke-width="1.1" stroke-linejoin="round"/></svg></div><!--/RUN-->
<!--BBAR-->
<div id="bbar" class="a"><div class="a" style="left:548.5px;top:0;width:88px;height:27px;background:#2d2f30"></div><svg style="left:32px;top:8px" width="15" height="13" viewBox="0 0 15 13"><rect width="15" height="13" rx="1" fill="#c4c4c4"/><path d="M3,2.6 L6.6,5.8 L3,9" fill="none" stroke="#3c3f41" stroke-width="1.6"/><path d="M7.4,9.8 H12" stroke="#3c3f41" stroke-width="1.5"/></svg><span style="left:52px;letter-spacing:0.1px">Terminal</span><svg style="left:136px;top:7px" width="16" height="14" viewBox="0 0 16 14"><path d="M15.5,0 Q16,9 11,11.6 Q5,14.4 0.5,11.6 Q0,6 6,4.6 Q12,3.6 15.5,0 Z" fill="#c4c4c4"/><path d="M1,12.4 Q7,11.4 11.6,6.6" fill="none" stroke="#3c3f41" stroke-width="0.9"/></svg><span style="left:157px;letter-spacing:-0.2px">Spring</span><svg style="left:231px;top:6px" width="16" height="16" viewBox="0 0 16 16"><path d="M0,0 H12 V3 H3 V12 H0 Z" fill="#c4c4c4"/><rect x="4.6" y="4.6" width="11.4" height="11.4" fill="#c4c4c4"/><rect x="4.6" y="4.6" width="11.4" height="2.6" fill="#dcdcdc"/><text x="10.3" y="14.6" text-anchor="middle" font-family="Liberation Sans,sans-serif" font-weight="bold" font-size="7.4" fill="#3c3f41">EE</text></svg><span style="left:251px;letter-spacing:-0.35px">Java Enterprise</span><svg style="left:383px;top:7px" width="16" height="15" viewBox="0 0 16 15"><rect x="0" y="0" width="12" height="3.4" fill="#c4c4c4"/><rect x="0" y="5" width="6" height="3.4" fill="#c4c4c4"/><rect x="0" y="10" width="6" height="3.4" fill="#c4c4c4"/><rect x="1.4" y="1.1" width="2" height="1.2" fill="#3c3f41"/><rect x="1.4" y="6.1" width="2" height="1.2" fill="#3c3f41"/><rect x="1.4" y="11.1" width="2" height="1.2" fill="#3c3f41"/><path d="M8,5 L16,10 L8,15 Z" fill="#c4c4c4"/></svg><span style="left:404.5px;letter-spacing:-0.05px">Application Servers</span><svg style="left:564.5px;top:8.5px" width="10" height="12" viewBox="0 0 10 12"><path d="M0,0 L10,6 L0,12 Z" fill="#c4c4c4"/></svg><span style="left:583.5px;letter-spacing:-0.5px;color:#d0d0d0"><u>4</u>: Run</span><svg style="left:653px;top:9px" width="13" height="11" viewBox="0 0 13 11"><g fill="#c4c4c4"><rect x="0" y="0" width="2.4" height="2.2"/><rect x="4" y="0" width="9" height="2.2"/><rect x="0" y="4.4" width="2.4" height="2.2"/><rect x="4" y="4.4" width="9" height="2.2"/><rect x="0" y="8.8" width="2.4" height="2.2"/><rect x="4" y="8.8" width="9" height="2.2"/></g></svg><span style="left:672px;letter-spacing:-0.6px"><u>6</u>: TODO</span><svg style="left:1782px;top:6.5px" width="17" height="16" viewBox="0 0 17 16"><path d="M8.5,1 A7,7 0 1 0 8.5,15 H15.5 V8 A7,7 0 0 0 8.5,1 Z" fill="none" stroke="#c4c4c4" stroke-width="1.6"/></svg><span style="left:1804px;letter-spacing:-0.4px">Event Log</span></div><!--/BBAR-->
<!--STATUS-->
<div id="status" class="a"><svg style="left:3px;top:6.5px" width="16" height="14" viewBox="0 0 16 14"><rect x="0" y="1.5" width="1.6" height="13" fill="#c4c4c4"/><rect x="4.2" y="1" width="10.8" height="14" fill="none" stroke="#c4c4c4" stroke-width="1.7"/></svg><span style="left:30px;top:2.7px;font-size:16.6px">All files are up-to-date (moments ago)</span><svg style="left:787px;top:5px" width="17" height="17" viewBox="0 0 17 17"><g stroke="#8c8c8c" stroke-width="1.8" stroke-linecap="round"><path d="M8.5,1 V4.6" transform="rotate(0 8.5 8.5)" opacity="0.35"/><path d="M8.5,1 V4.6" transform="rotate(45 8.5 8.5)" opacity="0.43"/><path d="M8.5,1 V4.6" transform="rotate(90 8.5 8.5)" opacity="0.51"/><path d="M8.5,1 V4.6" transform="rotate(135 8.5 8.5)" opacity="0.59"/><path d="M8.5,1 V4.6" transform="rotate(180 8.5 8.5)" opacity="0.67"/><path d="M8.5,1 V4.6" transform="rotate(225 8.5 8.5)" opacity="0.75"/><path d="M8.5,1 V4.6" transform="rotate(270 8.5 8.5)" opacity="0.83"/><path d="M8.5,1 V4.6" transform="rotate(315 8.5 8.5)" opacity="0.91"/></g></svg><span style="left:809.5px;top:2.7px;font-size:16.6px;letter-spacing:-0.45px">Build</span><div class="a" style="left:1345px;top:10.5px;width:182px;height:4px;border-radius:2px;background:#787878"></div><svg style="left:1535px;top:5px" width="15" height="15" viewBox="0 0 15 15"><circle cx="7.5" cy="7.5" r="7.5" fill="#5e6062"/><path d="M4.6,4.6 L10.4,10.4 M10.4,4.6 L4.6,10.4" stroke="#3c3f41" stroke-width="1.4"/></svg><span style="left:1580px;top:2.7px;font-size:16.6px;letter-spacing:-0.5px">70:70</span><span style="left:1634px;top:2.7px;font-size:16.6px;letter-spacing:-1.9px">CRLF</span><svg style="left:1675px;top:9.5px" width="7" height="11" viewBox="0 0 7 11"><path d="M0,4 L3.5,0 L7,4 Z M0,7 L3.5,11 L7,7 Z" fill="#a8a8a8"/></svg><span style="left:1695px;top:2.7px;font-size:16.6px;letter-spacing:-0.85px">UTF-8</span><svg style="left:1743px;top:9.5px" width="7" height="11" viewBox="0 0 7 11"><path d="M0,4 L3.5,0 L7,4 Z M0,7 L3.5,11 L7,7 Z" fill="#a8a8a8"/></svg><span style="left:1764px;top:2.7px;font-size:16.6px;letter-spacing:-0.2px">4 spaces</span><svg style="left:1833px;top:9.5px" width="7" height="11" viewBox="0 0 7 11"><path d="M0,4 L3.5,0 L7,4 Z M0,7 L3.5,11 L7,7 Z" fill="#a8a8a8"/></svg><svg style="left:1855px;top:5px" width="17" height="16" viewBox="0 0 17 16"><path d="M2,7 V4 Q2,1 5,1 Q8,1 8,4" fill="none" stroke="#c4c4c4" stroke-width="1.8"/><rect x="6" y="6.6" width="11" height="9.4" fill="#c4c4c4"/></svg></div><!--/STATUS-->
<!--IME-->
<div class="a" id="ime" style="left:1650px;top:420px;width:222px;height:40px"><div class="a" style="left:26px;top:7px;width:196px;height:29px;background:#ffffff"></div><div class="a" style="left:6px;top:5.5px;width:30px;height:30px;border-radius:5px;background:#f0622a;transform:rotate(-14deg)"></div><div class="a" style="left:8px;top:3px;width:26px;height:34px;line-height:34px;text-align:center;font-size:31px;font-weight:bold;font-style:italic;color:#fff;transform:rotate(-8deg) scale(1.25,0.9)">S</div><div class="a" style="left:45px;top:10.8px;font-size:18px;line-height:24px;font-weight:bold;color:#2b78c5">英</div><div class="a" style="left:76.5px;top:16.5px;width:4.4px;height:4.4px;border-radius:3px;background:#2b78c5"></div><svg style="left:83px;top:19px" width="6" height="11" viewBox="0 0 6 11"><path d="M1,0.5 H5 V4 Q5,8.5 1.2,10.5 L0.5,9.4 Q2.6,8 2.8,4.4 H1 Z" fill="#2b78c5"/></svg><svg style="left:98px;top:12px" width="21" height="21" viewBox="0 0 21 21"><circle cx="10.5" cy="10.5" r="9" fill="none" stroke="#2b78c5" stroke-width="2"/><rect x="6.6" y="5.4" width="1.8" height="4.4" rx="0.9" fill="#2b78c5"/><rect x="12.6" y="5.4" width="1.8" height="4.4" rx="0.9" fill="#2b78c5"/><path d="M5.4,11.6 Q10.5,18 15.6,11.6" fill="none" stroke="#2b78c5" stroke-width="1.8" stroke-linecap="round"/></svg><svg style="left:128px;top:11px" width="17" height="22" viewBox="0 0 17 22"><rect x="5" y="0.5" width="7" height="13" rx="3.5" fill="#2b78c5"/><path d="M1.5,8 V9.5 Q1.5,16 8.5,16 Q15.5,16 15.5,9.5 V8" fill="none" stroke="#2b78c5" stroke-width="2"/><path d="M8.5,16 V20 M4.5,20.5 H12.5" stroke="#2b78c5" stroke-width="2"/></svg><svg style="left:153px;top:14px" width="21" height="17" viewBox="0 0 21 17"><rect x="0" y="0" width="21" height="17" rx="2" fill="#2b78c5"/><g fill="#fff"><rect x="3" y="3.4" width="2.4" height="2.2"/><rect x="7" y="3.4" width="2.4" height="2.2"/><rect x="11" y="3.4" width="2.4" height="2.2"/><rect x="15" y="3.4" width="2.4" height="2.2"/><rect x="3" y="7.2" width="2.4" height="2.2"/><rect x="7" y="7.2" width="2.4" height="2.2"/><rect x="11" y="7.2" width="2.4" height="2.2"/><rect x="15" y="7.2" width="2.4" height="2.2"/><rect x="3" y="11.4" width="15" height="2.2"/></g></svg><svg style="left:181px;top:13px" width="22" height="20" viewBox="0 0 22 20"><circle cx="7.5" cy="4" r="3.6" fill="#c5c6d8"/><path d="M1,18 Q1,9 7.5,9 Q12,9 13,13 V18 Z" fill="#c5c6d8"/><rect x="7.4" y="9.6" width="14" height="8.8" fill="#c5c6d8" stroke="#fff" stroke-width="0.8"/><text x="14.4" y="17.4" text-anchor="middle" font-family="Liberation Sans,sans-serif" font-weight="bold" font-size="9" fill="#ffffff">15</text></svg><svg style="left:208px;top:13px" width="22" height="19" viewBox="0 0 22 19"><path d="M0,4 L5,0.5 Q9,3.5 13,0.5 L22,4 V9 H18 V18.5 H3.5 V9.5 L1,10 Z" fill="#2b78c5"/></svg></div><!--/IME-->
</body></html>
